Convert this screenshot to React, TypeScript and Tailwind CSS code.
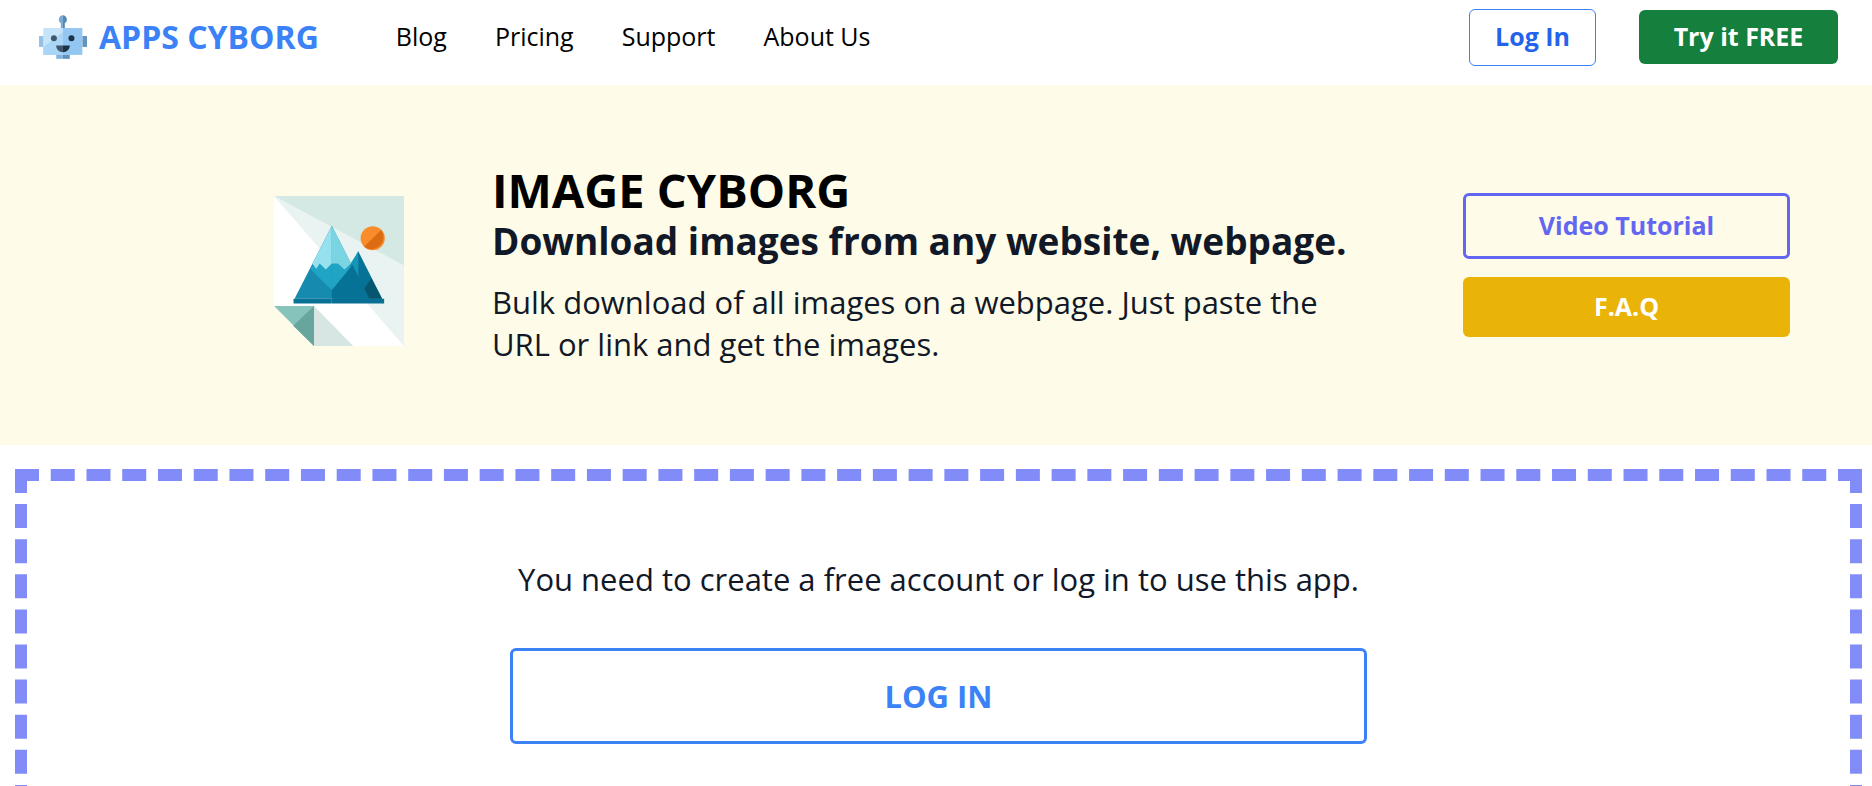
import React from 'react';

interface NavLink {
  label: string;
  href: string;
}

const navLinks: NavLink[] = [
  { label: 'Blog', href: '#blog' },
  { label: 'Pricing', href: '#pricing' },
  { label: 'Support', href: '#support' },
  { label: 'About Us', href: '#about' },
];

const RobotLogo: React.FC = () => (
  <svg viewBox="27 30 145 132" className="w-12 h-11" aria-hidden="true">
    {/* Antenna */}
    <path d="M99 30a13 13 0 0 0-6 24v16h6z" fill="#76a9d6" />
    <path d="M99 30a13 13 0 0 1 6 24v16h-6z" fill="#5288b5" />
    {/* Ears */}
    <path d="M27 93h14v33H27z" fill="#93c1e6" />
    <path d="M158 93h14v33h-14z" fill="#6394bf" />
    {/* Head */}
    <path d="M40 69h59v81H40z" fill="#c5e4fa" />
    <path d="M40 126l59-44v68H40z" fill="#a9d5f7" />
    <path d="M99 69h59v81H99z" fill="#93c6f0" />
    {/* Eyes */}
    <circle cx="72" cy="100" r="9" fill="#3f566b" />
    <circle cx="125" cy="100" r="9" fill="#1c3347" />
    {/* Mouth */}
    <path d="M79 122h20v20c-12 0-20-8-20-20z" fill="#3f566b" />
    <path d="M99 122h21c0 12-9 20-21 20z" fill="#1c3347" />
    {/* Neck */}
    <path d="M79 150h20v12H79z" fill="#82b4de" />
    <path d="M99 150h21v12H99z" fill="#5f92bf" />
  </svg>
);

const MountainPicture: React.FC = () => (
  <svg
    viewBox="44 48 387 447"
    className="w-[130px] h-[150px] mt-3 shrink-0"
    role="img"
    aria-label="Image Cyborg"
  >
    {/* Sheet */}
    <path d="M44 48h387v447H163L44 376z" fill="#ffffff" />
    <path d="M44 48l387 207v240z" fill="#e9f3f1" />
    <path d="M44 48h387v207z" fill="#d4e8e4" />
    {/* Folded corner */}
    <path d="M163 376l117 119H163z" fill="#d7e5e3" />
    <path d="M44 376h119v119z" fill="#86c3ba" />
    <path d="M163 376v119l-62-60z" fill="#68a69d" />
    {/* Sun */}
    <circle cx="338" cy="174" r="36" fill="#fb8c2c" />
    <path d="M363 149a36 36 0 0 1-51 50z" fill="#dc6b12" />
    {/* Small mountain */}
    <path d="M295 213l71 141H222z" fill="#067295" />
    <path d="M295 213v80l-24-42z" fill="#1496b8" />
    <path d="M334 293l32 61h-42l-12-29z" fill="#075670" />
    {/* Big mountain */}
    <path d="M216 137l111 217H105z" fill="#168baf" />
    <path d="M156 259l60-20v90l-63-63z" fill="#20a4c6" />
    <path d="M216 239l60 20-60 70z" fill="#20a4c6" />
    <path d="M216 329l62-76 49 101H216z" fill="#067295" />
    {/* Snow cap */}
    <path d="M216 137v112l-18 18-18-18-10 16-12-14z" fill="#97e1ee" />
    <path d="M216 137l58 112-20 18-20-18-18 0z" fill="#7ad4e1" />
    {/* Ground */}
    <path d="M102 354h114v14H102z" fill="#067295" />
    <path d="M216 354h156v14H216z" fill="#086f94" />
  </svg>
);

const Header: React.FC = () => (
  <header className="flex items-start h-[85px] pl-[39px] pr-[34px]">
    <a href="#home" className="flex items-center gap-3 h-[74px] text-[#3b82f6]">
      <RobotLogo />
      <span className="text-[32px] leading-[42px] font-bold">APPS CYBORG</span>
    </a>
    <nav className="flex items-center gap-12 h-[74px] ml-[77px] text-[25px] text-black">
      {navLinks.map((link) => (
        <a key={link.label} href={link.href}>
          {link.label}
        </a>
      ))}
    </nav>
    <div className="flex items-center gap-[43px] h-[74px] ml-auto">
      <button
        type="button"
        className="w-[127px] h-[57px] rounded-md border border-[#3b82f6] text-[25px] font-bold text-[#2563eb]"
      >
        Log In
      </button>
      <button
        type="button"
        className="w-[199px] h-[54px] rounded-md bg-[#15803d] text-[25px] font-bold text-white"
      >
        Try it FREE
      </button>
    </div>
  </header>
);

const Hero: React.FC = () => (
  <section className="flex items-center h-[360px] pl-[274px] pr-[82px] bg-[#fefce8]">
    <MountainPicture />
    <div className="flex-1 ml-[88px] mr-[100px] pb-0.5 text-[#111827]">
      <h1 className="text-[47px] leading-[54px] font-bold text-black">IMAGE CYBORG</h1>
      <h2 className="text-[37px] leading-[48px] font-bold">
        Download images from any website, webpage.
      </h2>
      <p className="mt-4 text-[31px] leading-[42px]">
        Bulk download of all images on a webpage. Just paste the URL or link and get the images.
      </p>
    </div>
    <div className="flex flex-col gap-[18px] w-[327px] text-[25px] font-bold">
      <button
        type="button"
        className="h-[66px] rounded-md border-3 border-[#6366f1] text-[#6366f1]"
      >
        Video Tutorial
      </button>
      <button type="button" className="h-[60px] rounded-md bg-[#eab308] text-white">
        F.A.Q
      </button>
    </div>
  </section>
);

const LoginPanel: React.FC = () => (
  <section className="flex flex-col items-center mt-6 ml-[15px] mr-[10px] pt-[77px] pb-[88px] border-12 border-dashed border-[#818cf8]">
    <p className="text-[31px] leading-[42px] text-[#111827]">
      You need to create a free account or log in to use this app.
    </p>
    <button
      type="button"
      className="w-[857px] h-24 mt-12 rounded-md border-3 border-[#3b82f6] text-[31px] font-bold text-[#3b82f6]"
    >
      LOG IN
    </button>
  </section>
);

export default function App() {
  return (
    <main className="bg-white font-['Open_Sans',sans-serif]">
      <Header />
      <Hero />
      <LoginPanel />
    </main>
  );
}
